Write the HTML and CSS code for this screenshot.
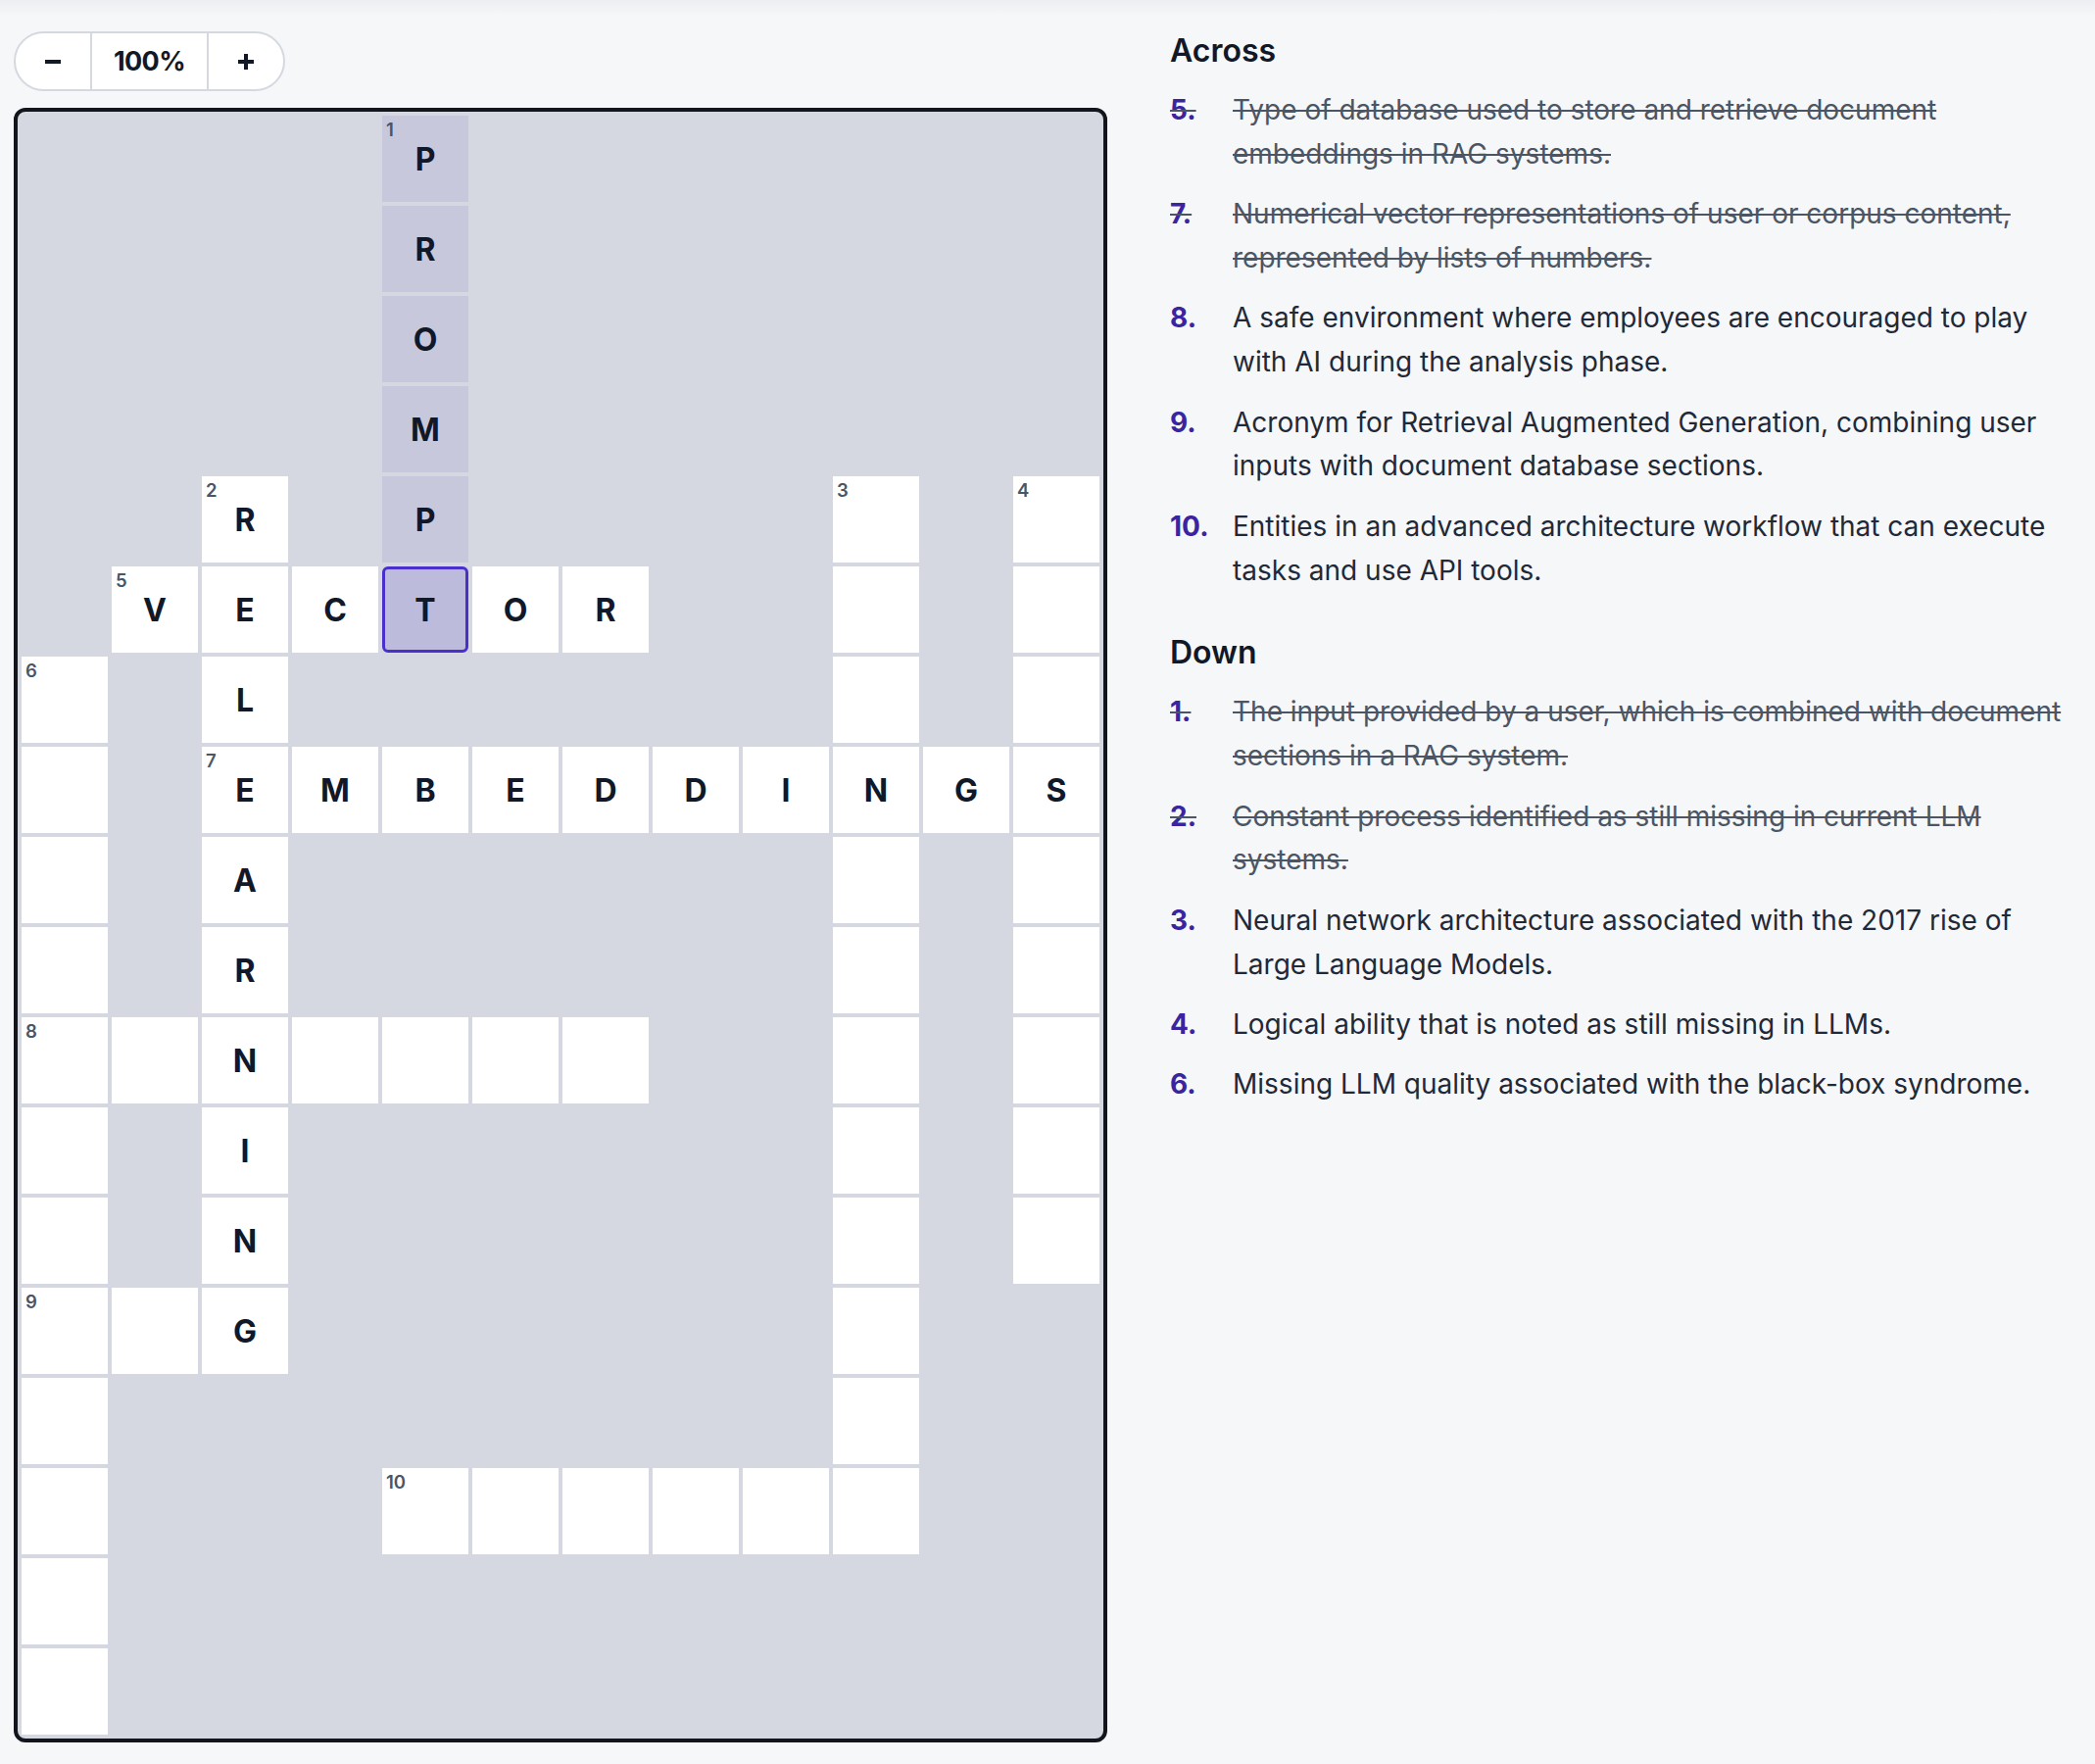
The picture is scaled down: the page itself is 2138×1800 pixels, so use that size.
FILE: index.html
```html
<!DOCTYPE html>
<html lang="en">
<head>
  <meta charset="UTF-8" />
  <meta name="viewport" content="width=device-width, initial-scale=1.0"/>
  <title>Crossword</title>
  <link rel="stylesheet" href="styles.css">
</head>
<body>
  <div class="page">
    <div class="board-column">
      <div class="zoom-control">
        <button class="zoom-btn" aria-label="Zoom out">
          <svg width="18" height="18" viewBox="0 0 18 18"><path d="M1 9h16" stroke="currentColor" stroke-width="4"/></svg>
        </button>
        <span class="zoom-value">100%</span>
        <button class="zoom-btn" aria-label="Zoom in">
          <svg width="18" height="18" viewBox="0 0 18 18"><path d="M1 9h16M9 1v16" stroke="currentColor" stroke-width="4"/></svg>
        </button>
      </div>
      <div class="board" id="board"></div>
    </div>

    <div class="clues">
      <h2>Across</h2>
      <ol class="clue-list">
        <li class="solved"><span class="num">5.</span><span>Type of database used to store and retrieve document embeddings in RAG systems.</span></li>
        <li class="solved"><span class="num">7.</span><span>Numerical vector representations of user or corpus content, represented by lists of numbers.</span></li>
        <li><span class="num">8.</span><span>A safe environment where employees are encouraged to play with AI during the analysis phase.</span></li>
        <li><span class="num">9.</span><span>Acronym for Retrieval Augmented Generation, combining user inputs with document database sections.</span></li>
        <li><span class="num">10.</span><span>Entities in an advanced architecture workflow that can execute tasks and use API tools.</span></li>
      </ol>
      <h2 class="down">Down</h2>
      <ol class="clue-list">
        <li class="solved"><span class="num">1.</span><span>The input provided by a user, which is combined with document sections in a RAG system.</span></li>
        <li class="solved"><span class="num">2.</span><span>Constant process identified as still missing in current LLM systems.</span></li>
        <li><span class="num">3.</span><span>Neural network architecture associated with the 2017 rise of Large Language Models.</span></li>
        <li><span class="num">4.</span><span>Logical ability that is noted as still missing in LLMs.</span></li>
        <li><span class="num">6.</span><span>Missing LLM quality associated with the black-box syndrome.</span></li>
      </ol>
    </div>
  </div>

  <script>
    // '#' = block, '.' = empty square, letter = filled square
    const layout = [
      "####P#######",
      "####R#######",
      "####O#######",
      "####M#######",
      "##R#P####.#.",
      "#VECTOR##.#.",
      ".#L######.#.",
      ".#EMBEDDINGS",
      ".#A######.#.",
      ".#R######.#.",
      "..N....##.#.",
      ".#I######.#.",
      ".#N######.#.",
      "..G######.##",
      ".########.##",
      ".###......##",
      ".###########",
      ".###########"
    ];

    const numbers = {
      "0,4": 1, "4,2": 2, "4,9": 3, "4,11": 4, "5,1": 5,
      "6,0": 6, "7,2": 7, "10,0": 8, "13,0": 9, "15,4": 10
    };

    // current word: 1 down, cursor on the T
    const active = { col: 4, from: 0, to: 5 };
    const cursor = { row: 5, col: 4 };

    const board = document.getElementById("board");

    layout.forEach((line, r) => {
      [...line].forEach((ch, c) => {
        const cell = document.createElement("div");
        if (ch === "#") {
          cell.className = "cell block";
        } else {
          cell.className = "cell";
          if (c === active.col && r >= active.from && r <= active.to) cell.classList.add("in-word");
          if (r === cursor.row && c === cursor.col) cell.classList.add("current");
          const n = numbers[r + "," + c];
          if (n) {
            const label = document.createElement("span");
            label.className = "cell-num";
            label.textContent = n;
            cell.appendChild(label);
          }
          if (ch !== ".") {
            const letter = document.createElement("span");
            letter.className = "cell-letter";
            letter.textContent = ch;
            cell.appendChild(letter);
          }
        }
        board.appendChild(cell);
      });
    });
  </script>
</body>
</html>
```

FILE: styles.css
```css
body {
  margin: 0;
  font-family: Inter, "Noto Sans", "Liberation Sans", sans-serif;
  color: #111827;
  background: linear-gradient(#eceef1, #f6f7f9 16px) no-repeat, #f6f7f9;
}

.page {
  display: flex;
  align-items: flex-start;
  gap: 64px;
  padding: 0 14px;
}

.board-column {
  flex: none;
  padding-top: 32px;
}

/* zoom pill */
.zoom-control {
  display: inline-flex;
  align-items: stretch;
  height: 61px;
  box-sizing: border-box;
  border: 2px solid #d5d8df;
  border-radius: 999px;
  background: #fff;
  overflow: hidden;
}

.zoom-btn {
  width: 76px;
  border: none;
  background: none;
  padding: 0;
  color: #111827;
  display: flex;
  align-items: center;
  justify-content: center;
  cursor: pointer;
}

.zoom-value {
  width: 117px;
  border-left: 2px solid #d5d8df;
  border-right: 2px solid #d5d8df;
  display: flex;
  align-items: center;
  justify-content: center;
  font-size: 27px;
  letter-spacing: -0.6px;
  font-weight: 700;
}

/* grid */
.board {
  margin-top: 17px;
  display: grid;
  grid-template-columns: repeat(12, 88px);
  grid-auto-rows: 88px;
  gap: 4px;
  padding: 4px;
  border: 4px solid #12151c;
  border-radius: 12px;
  background: #d5d8e1;
}

.cell {
  position: relative;
  background: #fff;
  display: flex;
  align-items: center;
  justify-content: center;
  box-sizing: border-box;
}

.cell.block {
  background: transparent;
}

.cell.in-word {
  background: #c8c8dd;
}

.cell.current {
  background: #bcbbdc;
  border: 3px solid #4b2fcc;
  border-radius: 6px;
}

.cell-num {
  position: absolute;
  top: 5px;
  left: 4px;
  font-size: 18.5px;
  line-height: 1;
  font-weight: 600;
  color: #4b5563;
}

.current .cell-num {
  top: 2px;
  left: 1px;
}

.cell-letter {
  font-size: 32px;
  font-weight: 700;
  color: #111827;
}

/* clue lists */
.clues {
  flex: 1;
  padding-top: 30px;
}

.clues h2 {
  margin: 0 0 16px;
  font-size: 32px;
  line-height: 44px;
  font-weight: 600;
}

.clues h2.down {
  margin-top: 40px;
}

.clue-list {
  list-style: none;
  margin: 0;
  padding: 0;
}

.clue-list li {
  display: flex;
  font-size: 28px;
  line-height: 44.8px;
  color: #1f2937;
  margin-bottom: 16.6px;
}

.clue-list li .num {
  flex: none;
  width: 64px;
  font-weight: 700;
  color: #3b24a0;
}

.clue-list li.solved {
  color: #4b5563;
  text-decoration: line-through;
}
```
